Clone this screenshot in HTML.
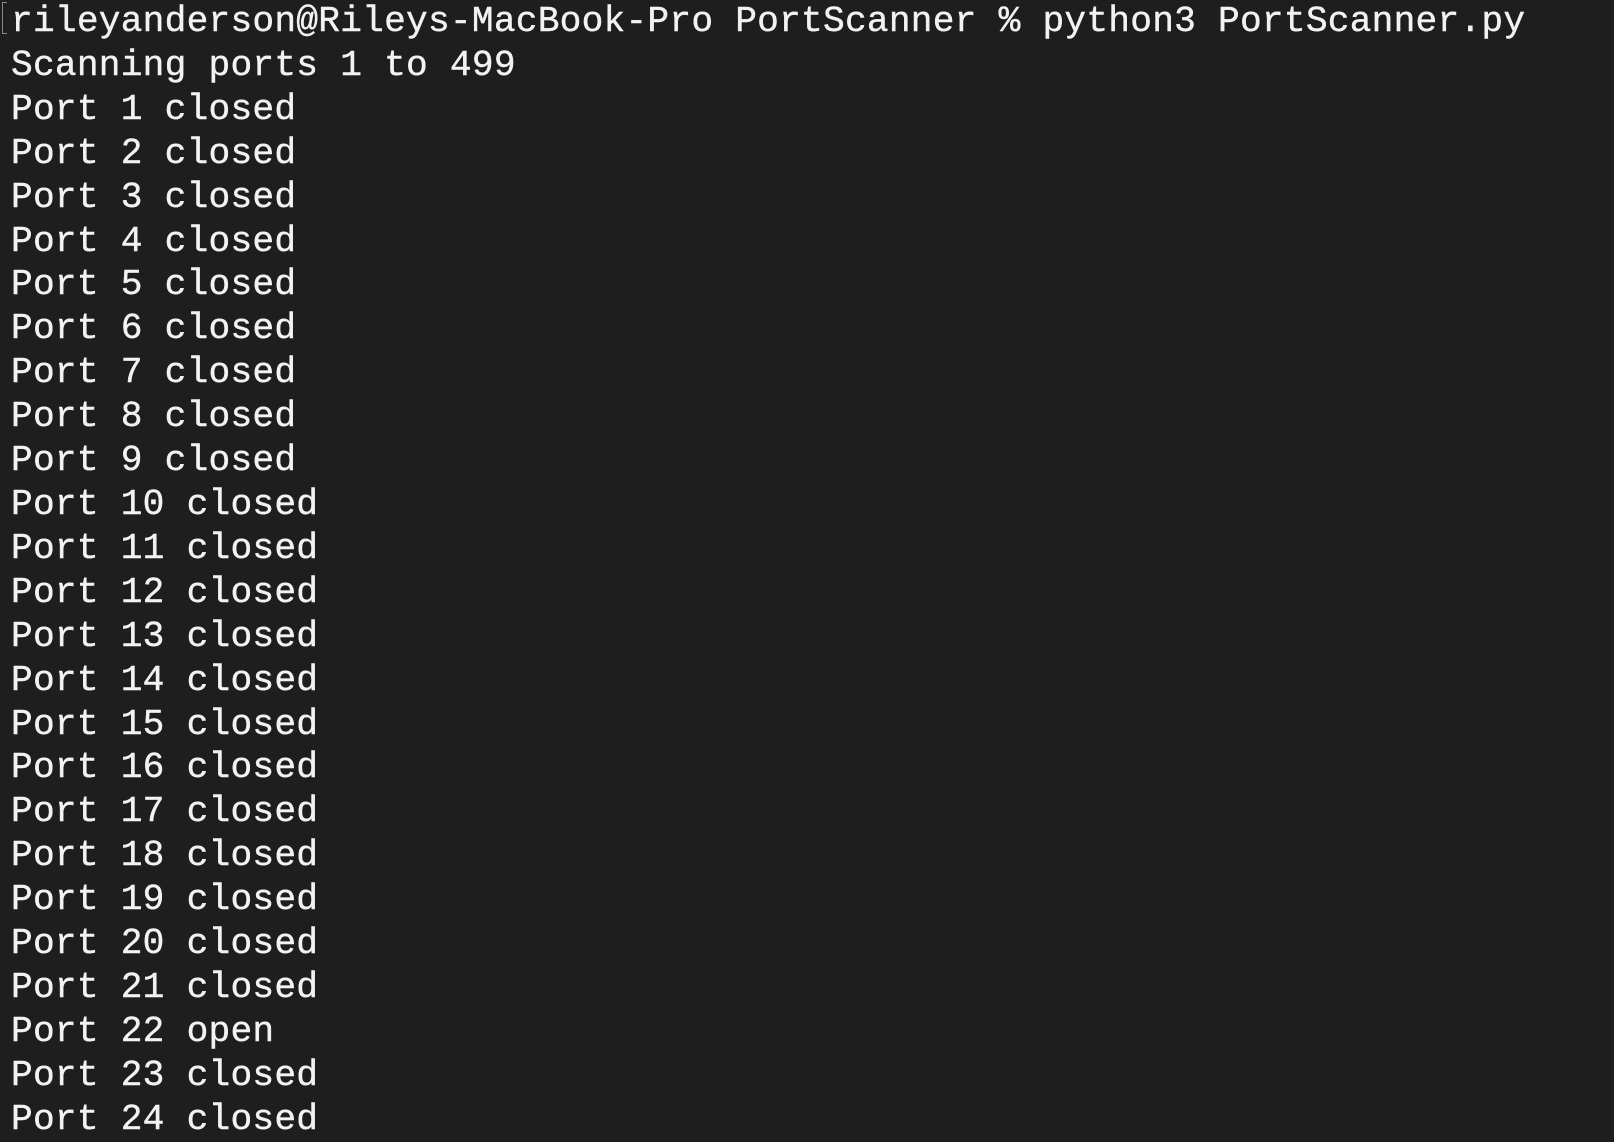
<!DOCTYPE html>
<html><head><meta charset="utf-8"><style>
html,body{margin:0;padding:0;background:#1e1e1e;width:1614px;height:1142px;overflow:hidden}
pre{margin:0;position:absolute;left:11px;top:0px;font-family:"Liberation Mono",monospace;font-size:36.2px;line-height:43.9px;color:#f2f2f2;letter-spacing:0.23px;-webkit-text-stroke:0.4px #f2f2f2}
.br{position:absolute;left:2px;top:2px;width:4px;height:30px;border:1.5px solid #888;border-right:none}
</style></head><body>
<div class="br"></div>
<pre>rileyanderson@Rileys-MacBook-Pro PortScanner % python3 PortScanner.py
Scanning ports 1 to 499
Port 1 closed
Port 2 closed
Port 3 closed
Port 4 closed
Port 5 closed
Port 6 closed
Port 7 closed
Port 8 closed
Port 9 closed
Port 10 closed
Port 11 closed
Port 12 closed
Port 13 closed
Port 14 closed
Port 15 closed
Port 16 closed
Port 17 closed
Port 18 closed
Port 19 closed
Port 20 closed
Port 21 closed
Port 22 open
Port 23 closed
Port 24 closed</pre>
</body></html>
